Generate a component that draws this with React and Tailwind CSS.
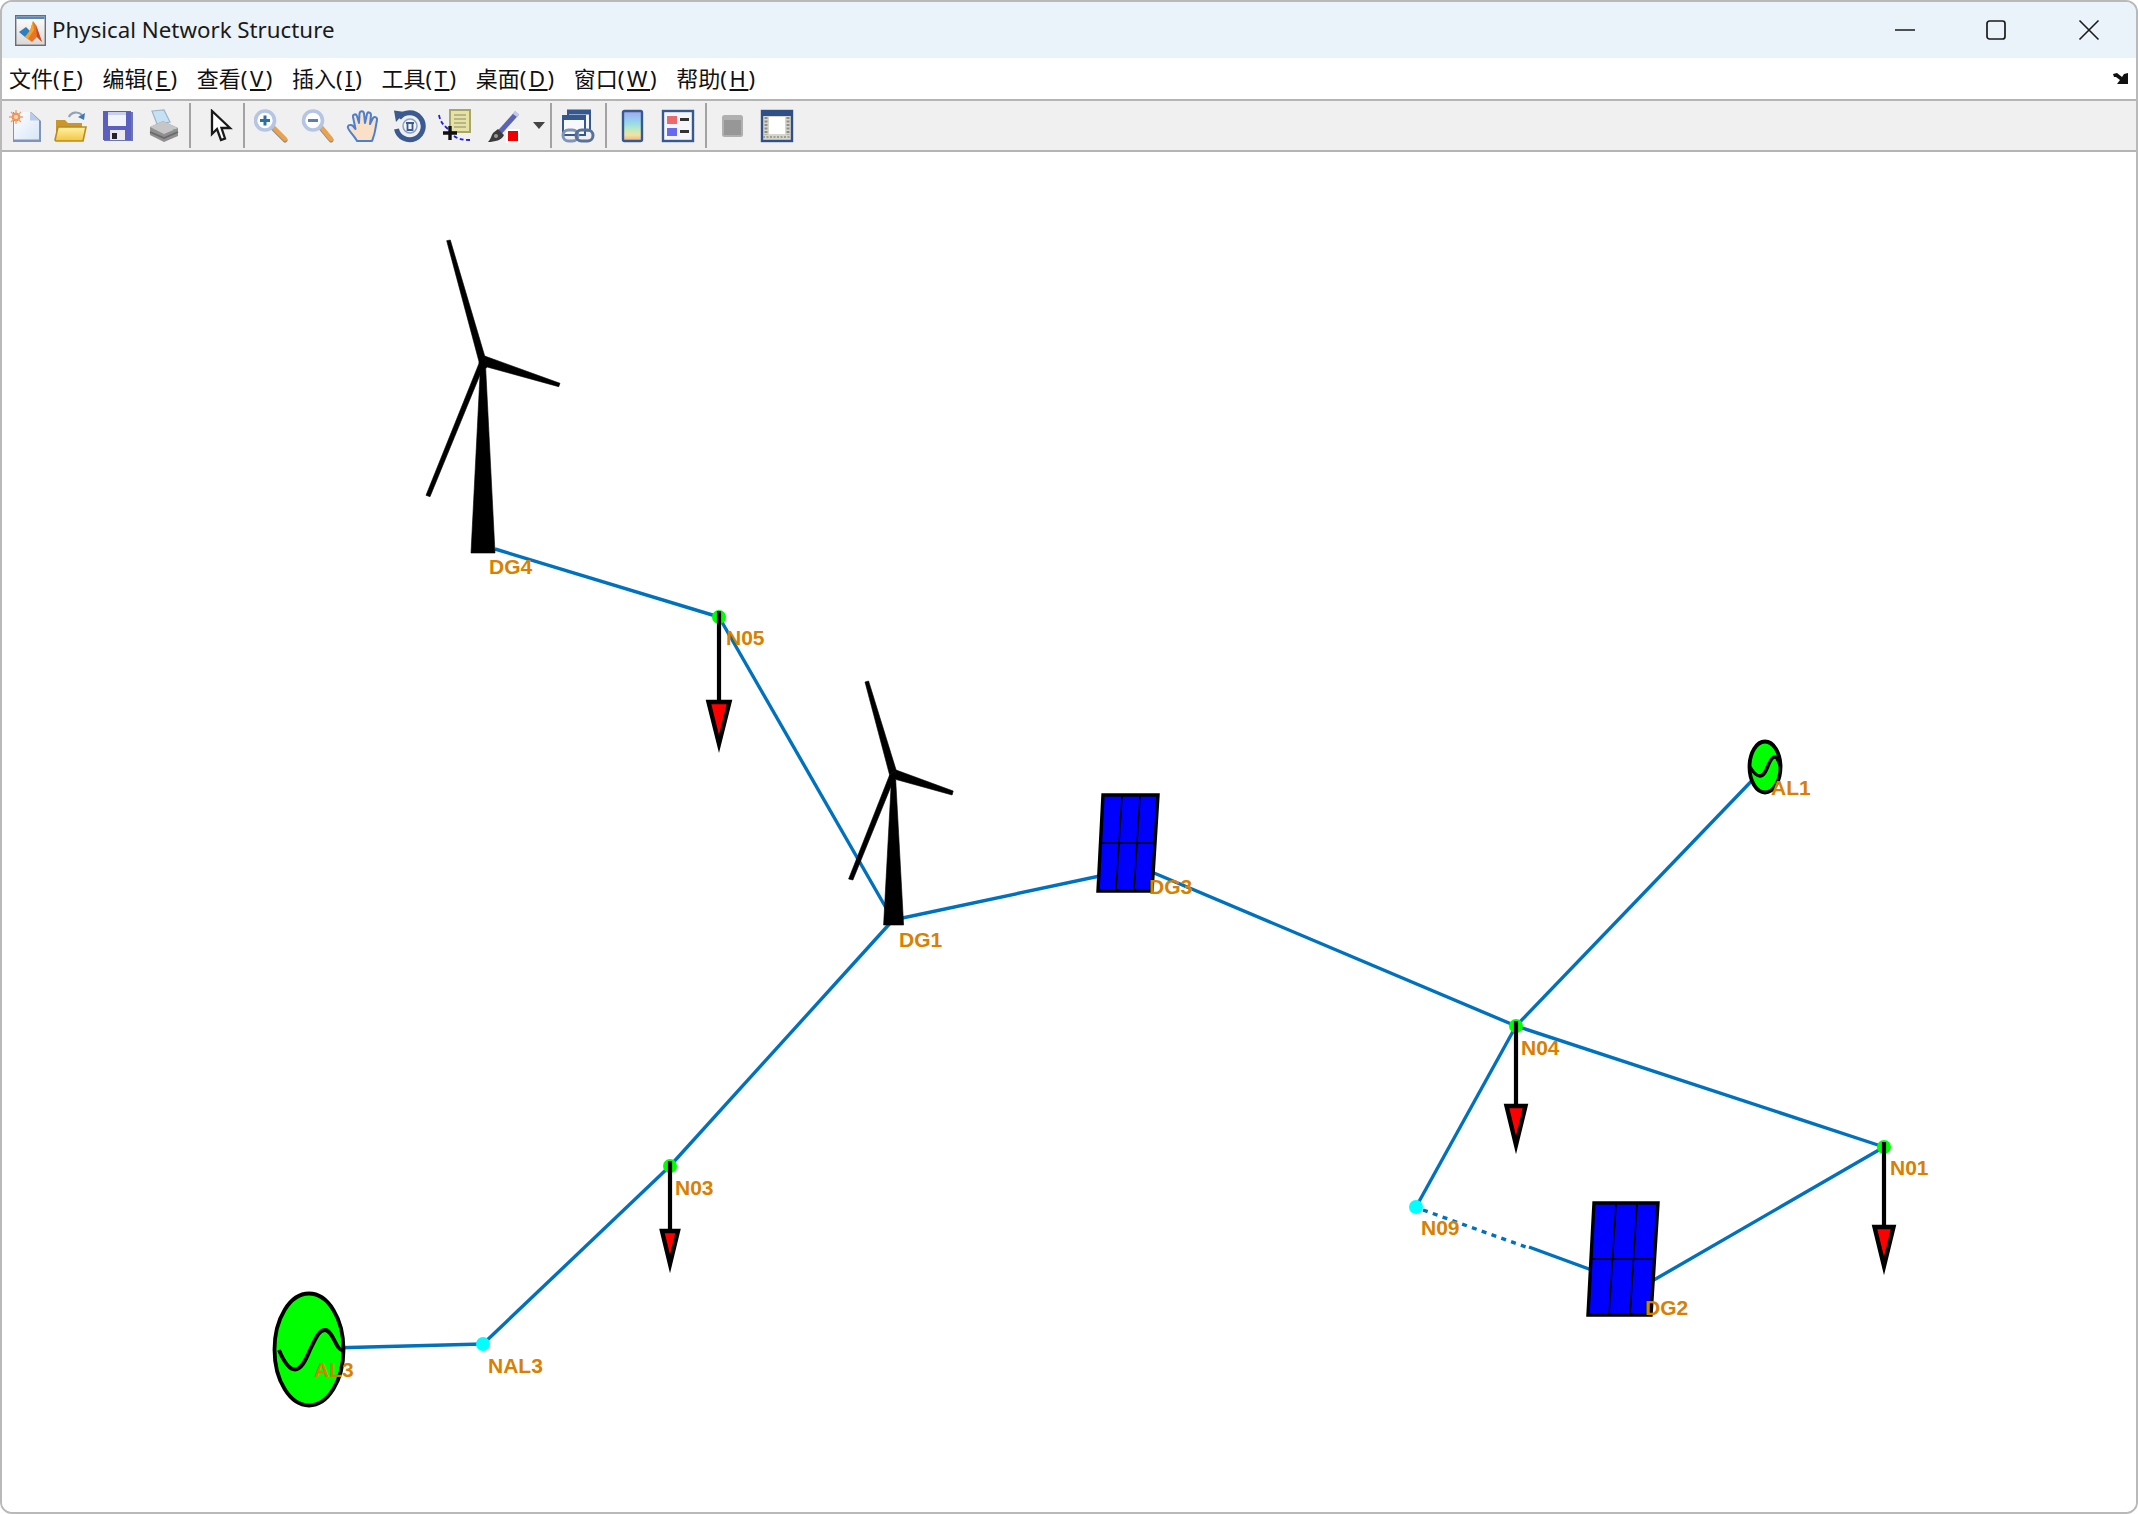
const MENU = [
  ['文件', 'F'], ['编辑', 'E'], ['查看', 'V'], ['插入', 'I'],
  ['工具', 'T'], ['桌面', 'D'], ['窗口', 'W'], ['帮助', 'H'],
];

// network drawing, coordinates are page pixels
const LINES = [
  [495, 549, 719, 617],
  [719, 617, 893, 920],
  [893, 920, 1128, 870],
  [893, 920, 670, 1166],
  [670, 1166, 483, 1344],
  [483, 1344, 330, 1348],
  [1128, 862, 1516, 1026],
  [1516, 1026, 1765, 767],
  [1516, 1026, 1884, 1147],
  [1516, 1026, 1416, 1207],
  [1884, 1147, 1640, 1288],
  [1529, 1247, 1600, 1273],
];
const NODES = [
  { x: 719, y: 617, c: '#00ff00' },
  { x: 670, y: 1166, c: '#00ff00' },
  { x: 1516, y: 1026, c: '#00ff00' },
  { x: 1884, y: 1147, c: '#00ff00' },
  { x: 483, y: 1344, c: '#00ffff' },
  { x: 1416, y: 1207, c: '#00ffff' },
];
const LOADS = [
  { x: 719, y: 611, top: 702, tip: 744, half: 10.5 },
  { x: 670, y: 1161, top: 1231, tip: 1264, half: 8 },
  { x: 1516, y: 1021, top: 1106, tip: 1145, half: 9.5 },
  { x: 1884, y: 1142, top: 1227, tip: 1266, half: 9.5 },
];
const PANELS = [
  {
    outline: '1103,795 1158,795 1152,891 1098,891',
    grid: [[1122, 796, 1116, 890], [1140, 796, 1134, 890], [1101, 843, 1155, 843]],
  },
  {
    outline: '1594,1203 1658,1203 1651,1315 1588,1315',
    grid: [[1616, 1204, 1609, 1315], [1637, 1204, 1630, 1315], [1592, 1259, 1654, 1259]],
  },
];
const TURBINES = [
  [
    '446.7,240.7 450.3,240 484.7,356 479.3,362.7',
    '484.7,356 560,383.3 558.7,386.7 486,366.7',
    '479.3,362.7 426,495.3 430,496.7 482.7,368.3',
    '480.5,365 485.5,365 495,553 471,553',
    '479,362 485,356 486.5,368 480,368',
  ],
  [
    '865,682 868.6,681 896.1,770 889.6,775',
    '896.1,770 953.2,791 952.1,795 894.3,779',
    '889.6,775 848.6,879 852.9,880 893.6,780',
    '891.4,780 895.7,780 903.6,925 883.6,925',
    '889.6,775 896,770 895,781 891,781',
  ],
];
const LABELS = [
  ['DG4', 489, 574], ['N05', 726, 645], ['DG1', 899, 947], ['DG3', 1149, 894],
  ['N04', 1521, 1055], ['N01', 1890, 1175], ['N09', 1421, 1235], ['DG2', 1645, 1315],
  ['AL3', 314, 1377], ['NAL3', 488, 1373], ['N03', 675, 1195], ['AL1', 1771, 795],
];

function Network() {
  return (
    <svg viewBox="2 152 2134 1360" className="block w-[2134px] h-[1360px]">
      <g stroke="#0072bd" strokeWidth="3.4" fill="none">
        {LINES.map(([x1, y1, x2, y2], i) => (
          <line key={i} x1={x1} y1={y1} x2={x2} y2={y2} />
        ))}
        <line x1="1423" y1="1210" x2="1526" y2="1247" strokeDasharray="5 5.4" />
      </g>
      {NODES.map((n, i) => (
        <circle key={i} cx={n.x} cy={n.y} r="7" fill={n.c} />
      ))}
      {LOADS.map((a, i) => (
        <g key={i} stroke="#000" fill="none">
          <line x1={a.x} y1={a.y} x2={a.x} y2={a.top} strokeWidth="4.2" />
          <polygon
            points={`${a.x - a.half},${a.top} ${a.x + a.half},${a.top} ${a.x},${a.tip}`}
            fill="#ff0000"
            strokeWidth="4.4"
            strokeMiterlimit="12"
          />
        </g>
      ))}
      {PANELS.map((p, i) => (
        <g key={i} stroke="#000">
          <polygon points={p.outline} fill="#0000ff" strokeWidth="3.4" />
          {p.grid.map(([x1, y1, x2, y2], j) => (
            <line key={j} x1={x1} y1={y1} x2={x2} y2={y2} strokeWidth="1.6" />
          ))}
        </g>
      ))}
      {TURBINES.map((t, i) => (
        <g key={i} fill="#000" stroke="#000" strokeWidth="0.6">
          {t.map((pts, j) => (
            <polygon key={j} points={pts} />
          ))}
        </g>
      ))}
      {/* AL3 and AL1 sources */}
      <ellipse cx="309" cy="1349.5" rx="34.5" ry="56" fill="#00ff00" stroke="#000" strokeWidth="3.8" />
      <path
        d="M279 1350 C284 1362 289 1369.5 295 1369.5 C301 1369.5 305 1362 310 1350 C316 1338 319 1330 325 1330 C333 1330 336 1350 342 1350"
        fill="none"
        stroke="#000"
        strokeWidth="3.8"
      />
      <ellipse cx="1765" cy="767" rx="15.5" ry="25.5" fill="#00ff00" stroke="#000" strokeWidth="3.8" />
      <path
        d="M1750 767 C1753 772 1756 776 1760 776 C1764 776 1766 771 1768 766 C1770 761 1772 757 1775 757 C1778 757 1779 764 1781 767"
        fill="none"
        stroke="#000"
        strokeWidth="3.4"
      />
      {LABELS.map(([t, x, y]) => (
        <text key={t} x={x} y={y} fill="#d98000" fontSize="21" fontWeight="700" fontFamily="'Liberation Sans', Arial, sans-serif">
          {t}
        </text>
      ))}
    </svg>
  );
}

function TitleIcon() {
  return (
    <svg viewBox="0 0 31 31" className="w-[31px] h-[31px] shrink-0">
      <defs>
        <linearGradient id="matlabBg" x1="0" y1="0" x2="0" y2="1">
          <stop offset="0" stopColor="#ffffff" />
          <stop offset="1" stopColor="#d8d8d8" />
        </linearGradient>
      </defs>
      <rect x="0.7" y="0.7" width="29.6" height="29.6" fill="url(#matlabBg)" stroke="#6d6d6d" strokeWidth="1.4" />
      <rect x="1.4" y="1.4" width="28.2" height="2.6" fill="#5a88b8" />
      <path d="M4 17 L11 12 L15 16 L10 22 Z" fill="#2f7fc0" />
      <path d="M10 22 L15 16 L18 6 L21 10 L27 27 L22 22 L17 27 Z" fill="#e8742c" />
      <path d="M15 16 L18 6 L19 15 L13 24 L10 22 Z" fill="#f5a623" />
      <path d="M21 10 L27 27 L22 22 Z" fill="#c8481c" />
    </svg>
  );
}

function NewIcon() {
  return (
    <svg viewBox="0 0 34 34" className="w-[34px] h-[34px] shrink-0">
      <defs>
        <linearGradient id="newPage" x1="0" y1="0" x2="1" y2="1">
          <stop offset="0" stopColor="#ffffff" />
          <stop offset="1" stopColor="#d7e6f7" />
        </linearGradient>
      </defs>
      <path d="M5 3 H23 L33 12 V33 H5 Z" fill="#7f93bd" />
      <path d="M6 3 H22 L31 11.5 V30.5 H6 Z" fill="url(#newPage)" />
      <path d="M22 3 V11.5 H31 Z" fill="#b9cbe6" />
      <circle cx="8" cy="8" r="4.4" fill="#f08a4b" />
      <path d="M8 1 V15 M1 8 H15 M3 3 L13 13 M13 3 L3 13" stroke="#f0a070" strokeWidth="1.3" />
      <circle cx="8" cy="8" r="2" fill="#fbd8b0" />
    </svg>
  );
}

function OpenIcon() {
  return (
    <svg viewBox="0 0 34 34" className="w-[34px] h-[34px] shrink-0">
      <defs>
        <linearGradient id="folderFill" x1="0" y1="0" x2="0" y2="1">
          <stop offset="0" stopColor="#fff2a8" />
          <stop offset="1" stopColor="#f3c63f" />
        </linearGradient>
      </defs>
      <path d="M16 8 C18 3 25 2 29 6" fill="none" stroke="#8fa3b8" strokeWidth="2.2" />
      <path d="M32 4 L31 11 L25 8 Z" fill="#3f79b0" />
      <path d="M3 11 H12 L15 14 H29 V30 H3 Z" fill="#c8962a" />
      <path d="M2 31 L5 18 H33 L30 32 H3 Z" fill="url(#folderFill)" stroke="#b98a22" strokeWidth="1.6" />
    </svg>
  );
}

function SaveIcon() {
  return (
    <svg viewBox="0 0 34 34" className="w-[34px] h-[34px] shrink-0">
      <path d="M3 3 H32 V32 H3 Z" fill="#6b77a8" />
      <path d="M2 2 H30 V31 H2 Z" fill="#5b5fc0" />
      <rect x="7" y="3" width="18" height="14" fill="#f1f3fb" />
      <rect x="7" y="3" width="18" height="3" fill="#c9d0ee" />
      <rect x="9" y="21" width="15" height="10" fill="#e8e8ee" />
      <rect x="11" y="24" width="5" height="6" fill="#24242c" />
    </svg>
  );
}

function PrintIcon() {
  return (
    <svg viewBox="0 0 34 34" className="w-[34px] h-[34px] shrink-0">
      <path d="M5 2 L17 1 L23 13 L10 15 Z" fill="#c6e0f4" stroke="#9fb4c6" strokeWidth="1.2" />
      <path d="M3 18 L16 12 L31 19 V27 L17 33 L3 26 Z" fill="#8f8f8f" />
      <path d="M3 18 L16 12 L31 19 L17 25 Z" fill="#c6c6c6" />
      <path d="M3 23 L17 29 L31 23" fill="none" stroke="#6a6a6a" strokeWidth="1.8" />
      <circle cx="27" cy="21" r="1" fill="#5dba6a" />
    </svg>
  );
}

function PointerIcon() {
  return (
    <svg viewBox="0 0 34 34" className="w-[34px] h-[34px] shrink-0">
      <path
        d="M9 2 L9 25 L14 20 L18 31 L22 29.5 L18.5 19 L27 19 Z"
        fill="#fff"
        stroke="#1a1a1a"
        strokeWidth="2.3"
        strokeLinejoin="miter"
      />
    </svg>
  );
}

function Magnifier({ cx, mark }) {
  return (
    <svg viewBox="0 0 34 34" className="w-[34px] h-[34px] shrink-0">
      <line x1={cx + 8} y1="19" x2="31" y2="31" stroke="#8c8c8c" strokeWidth="5" strokeLinecap="round" />
      <line x1={cx + 8} y1="18" x2="31" y2="30" stroke="#eba24b" strokeWidth="4.4" strokeLinecap="round" />
      <circle cx={cx} cy="11.5" r="9.5" fill="#fff" stroke="#b4c6e4" strokeWidth="3.6" />
      <rect x={cx - 5} y="10" width="10" height="3" fill={mark} />
      {mark === '#2d6f9f' && <rect x={cx - 1.5} y="6.5" width="3" height="10" fill={mark} />}
    </svg>
  );
}

function HandIcon() {
  return (
    <svg viewBox="0 0 34 34" className="w-[34px] h-[34px] shrink-0">
      <path
        d="M11 32 C9 28 3 22 2 19 C1 16 5 15 7 17 L9.5 20 L7 8 C6.5 5 10 4.5 11 7 L13 14 L13.5 4.5 C14 1.5 17.5 1.5 18 4.5 L19 14 L21 5 C21.5 2.5 25 3 25 6 L24 15 L27 9 C28 7 31.5 8 31 11 L29 22 C28.5 26 27 29 26 32 Z"
        fill="#fae0c6"
        stroke="#4c7fd0"
        strokeWidth="2"
        strokeLinejoin="round"
      />
    </svg>
  );
}

function RotateIcon() {
  return (
    <svg viewBox="0 0 34 34" className="w-[34px] h-[34px] shrink-0">
      <path d="M6 9 A13.5 13.5 0 1 1 3.5 20" fill="none" stroke="#3a5a90" strokeWidth="5" />
      <path d="M1 1.5 L12 3 L3 13 Z" fill="#3a5a90" />
      <circle cx="17" cy="17" r="7" fill="#f2f4f8" stroke="#8aa0c4" strokeWidth="1.5" />
      <path d="M13 14 H21 M14.5 14 V21 H19.5 V14" fill="none" stroke="#3a5a90" strokeWidth="1.8" />
    </svg>
  );
}

function DatatipIcon() {
  return (
    <svg viewBox="0 0 34 34" className="w-[34px] h-[34px] shrink-0">
      <path d="M2 6 C3 12 6 16 11 20" fill="none" stroke="#2020e0" strokeWidth="1.8" strokeDasharray="4 2.5" />
      <path d="M17 27 C21 30 26 31 33 31" fill="none" stroke="#2020e0" strokeWidth="1.8" strokeDasharray="4 2.5" />
      <rect x="13" y="1" width="20" height="22" fill="#e6e2a4" stroke="#a6a66a" strokeWidth="2" />
      <path d="M17 6 H29 M17 10 H29 M17 14 H29 M17 18 H29" stroke="#a8a880" strokeWidth="1.6" />
      <path d="M13 17 V31 M6 24 H20" stroke="#111" strokeWidth="3.4" />
    </svg>
  );
}

function BrushIcon() {
  return (
    <svg viewBox="0 0 34 34" className="w-[34px] h-[34px] shrink-0">
      <line x1="31" y1="4" x2="14" y2="23" stroke="#5a63b8" strokeWidth="5" />
      <path d="M29 2 L33 5 L31 8 L27 5 Z" fill="#c4cbe8" />
      <path d="M12 20 L18 26 C16 31 9 33 2 33 C5 30 5 27 7 24 Z" fill="#3c3c3c" />
      <circle cx="10" cy="27" r="2" fill="#999" />
      <rect x="20" y="20" width="14" height="14" fill="#fff" />
      <rect x="22" y="22" width="10" height="10" fill="#f00000" />
    </svg>
  );
}

function LinkIcon() {
  return (
    <svg viewBox="0 0 34 34" className="w-[34px] h-[34px] shrink-0">
      <rect x="7" y="1.5" width="22" height="20" fill="#f4f6fa" stroke="#35588f" strokeWidth="2" />
      <rect x="7" y="1.5" width="22" height="4" fill="#35588f" />
      <rect x="2" y="7" width="22" height="19" fill="#f8f9fc" stroke="#35588f" strokeWidth="2" />
      <rect x="2" y="7" width="22" height="4" fill="#35588f" />
      <rect x="2" y="21" width="15" height="11" rx="5.5" fill="none" stroke="#7f94b8" strokeWidth="3" />
      <rect x="15" y="21" width="17" height="11" rx="5.5" fill="none" stroke="#587199" strokeWidth="3" />
    </svg>
  );
}

function ColorbarIcon() {
  return (
    <svg viewBox="0 0 34 34" className="w-[34px] h-[34px] shrink-0">
      <defs>
        <linearGradient id="barFill" x1="0" y1="0" x2="0" y2="1">
          <stop offset="0" stopColor="#a3a6ea" />
          <stop offset="0.35" stopColor="#93d4f2" />
          <stop offset="0.6" stopColor="#b8eac6" />
          <stop offset="0.8" stopColor="#f2e2a0" />
          <stop offset="1" stopColor="#f1b184" />
        </linearGradient>
      </defs>
      <rect x="8" y="2" width="19" height="30" rx="1.5" fill="url(#barFill)" stroke="#37598f" strokeWidth="2.4" />
    </svg>
  );
}

function LegendIcon() {
  return (
    <svg viewBox="0 0 34 34" className="w-[34px] h-[34px] shrink-0">
      <rect x="2" y="2" width="30" height="30" fill="#f5f6fa" stroke="#37598f" strokeWidth="2.4" />
      <rect x="6" y="7" width="10" height="8" fill="#ee6a6a" />
      <rect x="6" y="19" width="10" height="8" fill="#6a6af0" />
      <rect x="19" y="9" width="9" height="3" fill="#333" />
      <rect x="19" y="21" width="9" height="3" fill="#333" />
    </svg>
  );
}

function GrayIcon() {
  return (
    <svg viewBox="0 0 34 34" className="w-[34px] h-[34px] shrink-0">
      <rect x="6" y="6" width="21" height="22" rx="2.5" fill="#b0b0b0" />
      <rect x="8" y="11" width="17" height="15" fill="#979797" />
    </svg>
  );
}

function PlotToolsIcon() {
  return (
    <svg viewBox="0 0 34 34" className="w-[34px] h-[34px] shrink-0">
      <rect x="2" y="2" width="30" height="30" fill="#d6d6cc" stroke="#2f4f86" strokeWidth="2.4" />
      <rect x="3" y="3" width="28" height="4" fill="#2f4f86" />
      <rect x="9" y="8" width="16" height="17" fill="#fff" />
      <path d="M6 8 V26 M28 8 V26" stroke="#8f8f84" strokeWidth="3" strokeDasharray="2 1.5" />
      <path d="M3 28 H31" stroke="#9f9f92" strokeWidth="2" strokeDasharray="2 1.5" />
    </svg>
  );
}

function Sep({ className }) {
  return <div className={`w-[2px] h-[45px] bg-[#a3a3a3] shrink-0 ${className}`} />;
}

export default function App() {
  return (
    <div className="w-[2138px] h-[1514px] bg-white">
      <div className="w-full h-full flex flex-col overflow-hidden rounded-[12px] border-2 border-[#b9b9b9] bg-white">
        <div className="h-[56px] shrink-0 flex items-center bg-[#eaf3f9] pl-[13px]">
          <TitleIcon />
          <span className="ml-[6px] text-[22.3px] text-[#1a1a1a] font-['Noto_Sans',sans-serif]">Physical Network Structure</span>
          <div className="ml-auto flex items-center pr-[36px]">
            <svg viewBox="0 0 22 22" className="w-[22px] h-[22px]">
              <line x1="1" y1="11" x2="21" y2="11" stroke="#1a1a1a" strokeWidth="1.7" />
            </svg>
            <svg viewBox="0 0 22 22" className="ml-[69px] w-[22px] h-[22px]">
              <rect x="2" y="2" width="18" height="18" rx="2.5" fill="none" stroke="#1a1a1a" strokeWidth="1.7" />
            </svg>
            <svg viewBox="0 0 22 22" className="ml-[71px] w-[22px] h-[22px]">
              <path d="M1.5 1.5 L20.5 20.5 M20.5 1.5 L1.5 20.5" stroke="#1a1a1a" strokeWidth="1.6" />
            </svg>
          </div>
        </div>

        <div className="h-[41px] shrink-0 flex items-center pl-[7px] pr-[7px] gap-[17px] bg-white text-[22px] text-[#111] font-['Noto_Sans','Noto_Sans_CJK_SC',sans-serif]">
          {MENU.map(([name, key]) => (
            <span key={key}>
              {name}
              <span className="tracking-[2.6px]">(<u>{key}</u>)</span>
            </span>
          ))}
          <svg viewBox="0 0 16 13" className="ml-auto w-[16px] h-[13px]">
            <path d="M0 2 L4 1 L9 5 L11 2 L15 1 V12 H4 L7 8 L3 5 L1 5 Z" fill="#111" />
          </svg>
        </div>

        <div className="h-[53px] shrink-0 flex items-center pl-[6px] bg-[#f0f0f0] border-y-2 border-[#b4b4b4]">
          <div className="flex items-center blur-[0.4px]">
            <NewIcon />
            <div className="ml-[11px]"><OpenIcon /></div>
            <div className="ml-[14px]"><SaveIcon /></div>
            <div className="ml-[12px]"><PrintIcon /></div>
            <Sep className="ml-[8px]" />
            <div className="ml-[12px]"><PointerIcon /></div>
            <Sep className="ml-[6px]" />
            <div className="ml-[9px]"><Magnifier cx={11} mark="#2d6f9f" /></div>
            <div className="ml-[12px]"><Magnifier cx={13} mark="#5f7fa6" /></div>
            <div className="ml-[12px]"><HandIcon /></div>
            <div className="ml-[13px]"><RotateIcon /></div>
            <div className="ml-[10px]"><DatatipIcon /></div>
            <div className="ml-[15px]"><BrushIcon /></div>
            <svg viewBox="0 0 12 7" className="ml-[13px] w-[12px] h-[7px] shrink-0">
              <path d="M0 0 H12 L6 7 Z" fill="#444" />
            </svg>
            <Sep className="ml-[5px]" />
            <div className="ml-[9px]"><LinkIcon /></div>
            <Sep className="ml-[10px]" />
            <div className="ml-[8px]"><ColorbarIcon /></div>
            <div className="ml-[12px]"><LegendIcon /></div>
            <Sep className="ml-[10px]" />
            <div className="ml-[9px]"><GrayIcon /></div>
            <div className="ml-[10px]"><PlotToolsIcon /></div>
          </div>
        </div>

        <div className="flex-1 bg-white">
          <Network />
        </div>
      </div>
    </div>
  );
}
